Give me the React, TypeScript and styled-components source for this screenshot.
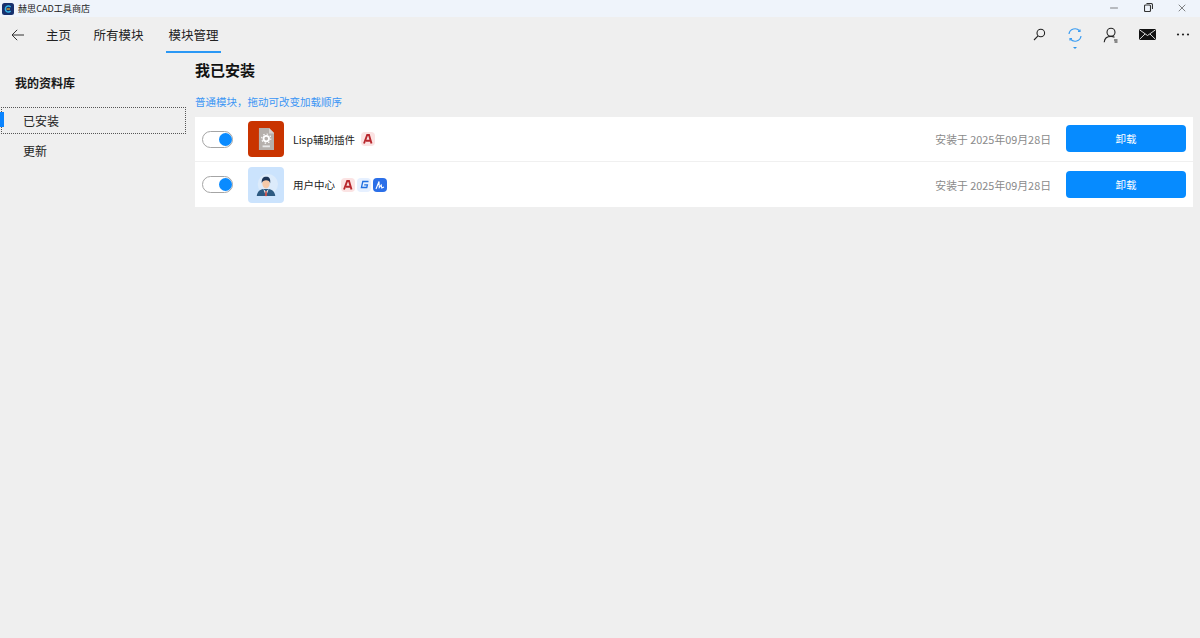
import React from 'react';
import styled, { createGlobalStyle } from 'styled-components';
import { X, Minus } from 'lucide-react';

const GlobalStyle = createGlobalStyle`
  html, body {
    margin: 0;
    height: 100%;
    background: #efefef;
    overflow: hidden;
  }
  body {
    font-family: "Noto Sans CJK SC", "Noto Sans", sans-serif;
    color: #1a1a1a;
  }
  #root {
    height: 100%;
  }
`;

const Page = styled.div`
  height: 638px;
  display: flex;
  flex-direction: column;
`;

const TitleBar = styled.div`
  height: 17px;
  background: #eff4fb;
  display: flex;
  align-items: center;
  padding-left: 1.5px;
`;

const AppName = styled.span`
  font-size: 9.1px;
  line-height: 17px;
  margin-left: 4.5px;
  color: #222;
`;

const WindowButtons = styled.div`
  margin-left: auto;
  display: flex;
  align-items: center;
  height: 17px;
  padding-right: 12px;
  gap: 23.5px;
  position: relative;
  top: -1px;
  color: #333;
`;

const NavBar = styled.nav`
  height: 35px;
  display: flex;
  align-items: stretch;
  padding-left: 11px;
`;

const BackButton = styled.div`
  width: 14px;
  display: flex;
  align-items: center;
  margin-right: 21px;
`;

const Tab = styled.div<{ $active?: boolean }>`
  position: relative;
  display: flex;
  align-items: center;
  font-size: 12.5px;
  color: #222;
  margin-right: ${p => (p.$active ? 0 : 22.5)}px;
  padding: 0 ${p => (p.$active ? 2.5 : 0)}px;

  ${p =>
    p.$active &&
    `
    &::after {
      content: '';
      position: absolute;
      left: 0;
      right: 0;
      bottom: -1px;
      height: 2px;
      background: #2a98f5;
    }
  `}
`;

const NavActions = styled.div`
  margin-left: auto;
  display: flex;
  align-items: center;
  margin-right: -1px;
`;

const ActionIcon = styled.div`
  position: relative;
  width: 36px;
  height: 35px;
  display: flex;
  align-items: center;
  justify-content: center;
`;

const SyncCaret = styled.div`
  position: absolute;
  left: 50%;
  top: 30px;
  margin-left: -2.5px;
  border-left: 2.5px solid transparent;
  border-right: 2.5px solid transparent;
  border-top: 2.5px solid #2a94ee;
`;

const Body = styled.div`
  flex: 1;
  display: flex;
`;

const Sidebar = styled.aside`
  width: 195px;
  flex-shrink: 0;
  padding-top: 22px;
  box-sizing: border-box;
`;

const SidebarTitle = styled.h2`
  margin: 0 0 15px 15px;
  font-size: 12px;
  line-height: 18px;
  font-weight: 700;
  color: #1a1a1a;
`;

const SideItem = styled.div<{ $focused?: boolean }>`
  position: relative;
  box-sizing: border-box;
  margin-left: 1px;
  width: 185px;
  height: 27px;
  padding-left: 21px;
  font-size: 12px;
  line-height: 25px;
  color: #222;
  margin-bottom: 3px;
  border: 1px ${p => (p.$focused ? 'dotted #555' : 'solid transparent')};

  ${p =>
    p.$focused &&
    `
    &::before {
      content: '';
      position: absolute;
      left: -2px;
      top: 4px;
      width: 4px;
      height: 15px;
      background: #0a84ff;
    }
  `}
`;

const Main = styled.main`
  flex: 1;
  padding-right: 7px;
`;

const PageTitle = styled.h1`
  margin: 0;
  font-size: 15px;
  line-height: 22px;
  font-weight: 700;
  color: #111;
  padding-top: 7px;
`;

const Hint = styled.div`
  margin-top: 14px;
  font-size: 10.5px;
  line-height: 14px;
  color: #3b96f5;
  margin-bottom: 8px;
`;

const ModuleList = styled.div`
  background: #fff;
`;

const ModuleRow = styled.div`
  height: 44px;
  box-sizing: border-box;
  display: flex;
  align-items: center;
  padding: 0 7px;

  & + & {
    border-top: 1px solid #f0f0f0;
    height: 46px;
  }
`;

const Toggle = styled.div`
  width: 31px;
  height: 17px;
  box-sizing: border-box;
  border: 1.5px solid #a5a5a5;
  border-radius: 9px;
  background: #fff;
  display: flex;
  align-items: center;
  justify-content: flex-end;
  padding-right: 0.5px;
  margin-right: 15px;

  &::after {
    content: '';
    width: 13px;
    height: 13px;
    border-radius: 50%;
    background: #0a8bff;
  }
`;

const ModuleIcon = styled.div<{ $bg: string }>`
  width: 36px;
  height: 36px;
  border-radius: 4px;
  background: ${p => p.$bg};
  display: flex;
  align-items: center;
  justify-content: center;
  margin-right: 9px;
`;

const ModuleName = styled.span`
  font-size: 10.5px;
  color: #222;
  margin-right: 3px;
`;

const Badges = styled.div`
  display: flex;
  gap: 2px;
  margin-left: 3px;
`;

const Badge = styled.div<{ $bg: string }>`
  width: 14px;
  height: 14px;
  border-radius: 4px;
  background: ${p => p.$bg};
  display: flex;
  align-items: center;
  justify-content: center;
`;

const InstalledAt = styled.span`
  margin-left: auto;
  margin-right: 15px;
  font-size: 10.85px;
  color: #8a8a8a;
`;

const UninstallButton = styled.button`
  width: 120px;
  height: 27px;
  border: 0;
  border-radius: 4px;
  background: #068bff;
  color: #fff;
  font-family: inherit;
  font-size: 10.5px;
  padding: 0;
  margin-bottom: 1px;
`;

const AppLogo = () => (
  <svg width="12" height="12" viewBox="0 0 12 12">
    <rect width="12" height="12" rx="2.5" fill="#16306e" />
    <path d="M8.6 4A3 3 0 1 0 8.6 8" fill="none" stroke="#35b6e8" strokeWidth="1.4" />
    <path d="M4.5 6H8" stroke="#f0b428" strokeWidth="1.2" />
  </svg>
);

const RestoreIcon = () => (
  <svg width="9" height="9" viewBox="0 0 9 9" fill="none" stroke="#333" strokeWidth="1.1">
    <rect x="0.5" y="2" width="6" height="6.5" rx="1" />
    <path d="M2.5 .5H7A1.5 1.5 0 0 1 8.5 2V6" />
  </svg>
);

const BackIcon = () => (
  <svg width="14" height="12" viewBox="0 0 14 12" fill="none" stroke="#333" strokeWidth="1">
    <path d="M13 6H1M6.2 .8 1 6l5.2 5.2" />
  </svg>
);

const SearchIcon = () => (
  <svg width="13" height="13" viewBox="0 0 13 13" fill="none" stroke="#222" strokeWidth="1.1">
    <circle cx="7.8" cy="5" r="3.8" />
    <path d="M5 7.9 1 12" />
  </svg>
);

const SyncIcon = () => (
  <svg width="16" height="16" viewBox="0 0 16 16" fill="none" stroke="#3a9cf2" strokeWidth="1.2">
    <path d="M2 7A6 6 0 0 1 12.600 4" />
    <path d="M14 9A6 6 0 0 1 3.400 12" />
    <path d="M13 2.500V4.500H11M3 13.500V11.500H5" />
  </svg>
);

const UserIcon = () => (
  <svg width="16" height="16" viewBox="0 0 16 16" fill="none" stroke="#222" strokeWidth="1.1">
    <circle cx="8" cy="5.2" r="4" />
    <path d="M1.2 15.2C1.6 11.4 4.4 9.4 8 9.4c1.3 0 2.5.3 3.5.8" />
    <path d="M11 13h3.5M11.5 15h3" />
  </svg>
);

const MailIcon = () => (
  <svg width="17" height="11" viewBox="0 0 17 11">
    <rect width="17" height="11" rx="1" fill="#111" />
    <path d="M.5 .8 8.500 6.500l8-5.700M.5 10.400 6 5M16.500 10.400 11 5" fill="none" stroke="#eee" strokeWidth=".9" />
  </svg>
);

const MoreIcon = () => (
  <svg width="14" height="3" viewBox="0 0 14 3" fill="#222">
    <circle cx="2" cy="1.5" r="1.1" />
    <circle cx="7" cy="1.5" r="1.1" />
    <circle cx="12" cy="1.5" r="1.1" />
  </svg>
);

const LispArt = () => (
  <svg width="16.5" height="22" viewBox="0 0 18 24">
    <path d="M1 0H12L18 6V24H1Z" fill="#b5b0ac" />
    <path d="M12 0 18 6H12Z" fill="#d5d2cf" />
    <circle cx="9" cy="11.500" r="3" fill="none" stroke="#fff" strokeWidth="2" />
    <circle cx="9" cy="11.500" r="5" fill="none" stroke="#fff" strokeWidth="1.200" strokeDasharray="1.600 2.300" />
    <rect x="5" y="19" width="8" height="2" fill="#e8e8e8" />
  </svg>
);

const UserArt = () => (
  <svg width="24" height="24" viewBox="0 0 26 26">
    <circle cx="15" cy="12" r="11" fill="#dcebfb" />
    <path d="M3 25c.4-5 3.500-7.200 7-7.800h6c3.500.6 6.600 2.800 7 7.800Z" fill="#2c5a82" />
    <path d="M10 17.200 13 20 16 17.200 13 25Z" fill="#f4f4f4" />
    <path d="M12.300 19.500h1.400L14.200 24 13 25.500 11.800 24Z" fill="#c0504d" />
    <ellipse cx="13" cy="11.500" rx="4" ry="5.200" fill="#f5c9a8" />
    <path d="M8.500 11C7.800 6 10 4 13.200 4s5 2 4.300 7c-.6-2-1.600-3.200-4.500-3.200-2 0-3.900.9-4.500 3.200Z" fill="#1d3557" />
  </svg>
);

const AutoCadMark = () => (
  <svg width="10" height="10" viewBox="0 0 10 10" fill="none" stroke="#b8272d" strokeWidth="1.900">
    <path d="M1 9.500 4.200 1H6L8.500 9.500M3 6.800H8" />
  </svg>
);

const SwMark = () => (
  <svg width="9" height="9" viewBox="0 0 9 9" fill="none" stroke="#1f6fe0" strokeWidth="1.300">
    <path d="M8.500 1.500H2.800L1.400 7.500H6.800L7.400 4.800H4.200" />
  </svg>
);

const BlueMark = () => (
  <svg width="10" height="10" viewBox="0 0 10 10" fill="none" stroke="#fff" strokeWidth="1.100">
    <path d="M1 9 4 1.500 4.300 7.500 6.200 5 6.800 8 9 7" />
  </svg>
);

const modules = [
  { name: 'Lisp辅助插件', bg: '#c93400', art: <LispArt />, date: '安装于 2025年09月28日', marks: ['cad'] },
  { name: '用户中心', bg: '#cbe3fd', art: <UserArt />, date: '安装于 2025年09月28日', marks: ['cad', 'sw', 'blue'] },
];

const renderMark = (mark: string) => {
  if (mark === 'cad') return <Badge key={mark} $bg="#fbe3e3"><AutoCadMark /></Badge>;
  if (mark === 'sw') return <Badge key={mark} $bg="#e6f0ff"><SwMark /></Badge>;
  return <Badge key={mark} $bg="#2b6fe8"><BlueMark /></Badge>;
};

const App: React.FC = () => (
  <Page>
    <GlobalStyle />
    <TitleBar>
      <AppLogo />
      <AppName>赫思CAD工具商店</AppName>
      <WindowButtons>
        <Minus size={12} strokeWidth={1.2} />
        <RestoreIcon />
        <X size={12} strokeWidth={1.2} />
      </WindowButtons>
    </TitleBar>
    <NavBar>
      <BackButton><BackIcon /></BackButton>
      <Tab>主页</Tab>
      <Tab>所有模块</Tab>
      <Tab $active>模块管理</Tab>
      <NavActions>
        <ActionIcon><SearchIcon /></ActionIcon>
        <ActionIcon><SyncIcon /><SyncCaret /></ActionIcon>
        <ActionIcon><UserIcon /></ActionIcon>
        <ActionIcon><MailIcon /></ActionIcon>
        <ActionIcon><MoreIcon /></ActionIcon>
      </NavActions>
    </NavBar>
    <Body>
      <Sidebar>
        <SidebarTitle>我的资料库</SidebarTitle>
        <SideItem $focused>已安装</SideItem>
        <SideItem>更新</SideItem>
      </Sidebar>
      <Main>
        <PageTitle>我已安装</PageTitle>
        <Hint>普通模块，拖动可改变加载顺序</Hint>
        <ModuleList>
          {modules.map(m => (
            <ModuleRow key={m.name}>
              <Toggle />
              <ModuleIcon $bg={m.bg}>{m.art}</ModuleIcon>
              <ModuleName>{m.name}</ModuleName>
              <Badges>{m.marks.map(renderMark)}</Badges>
              <InstalledAt>{m.date}</InstalledAt>
              <UninstallButton>卸载</UninstallButton>
            </ModuleRow>
          ))}
        </ModuleList>
      </Main>
    </Body>
  </Page>
);

export default App;
